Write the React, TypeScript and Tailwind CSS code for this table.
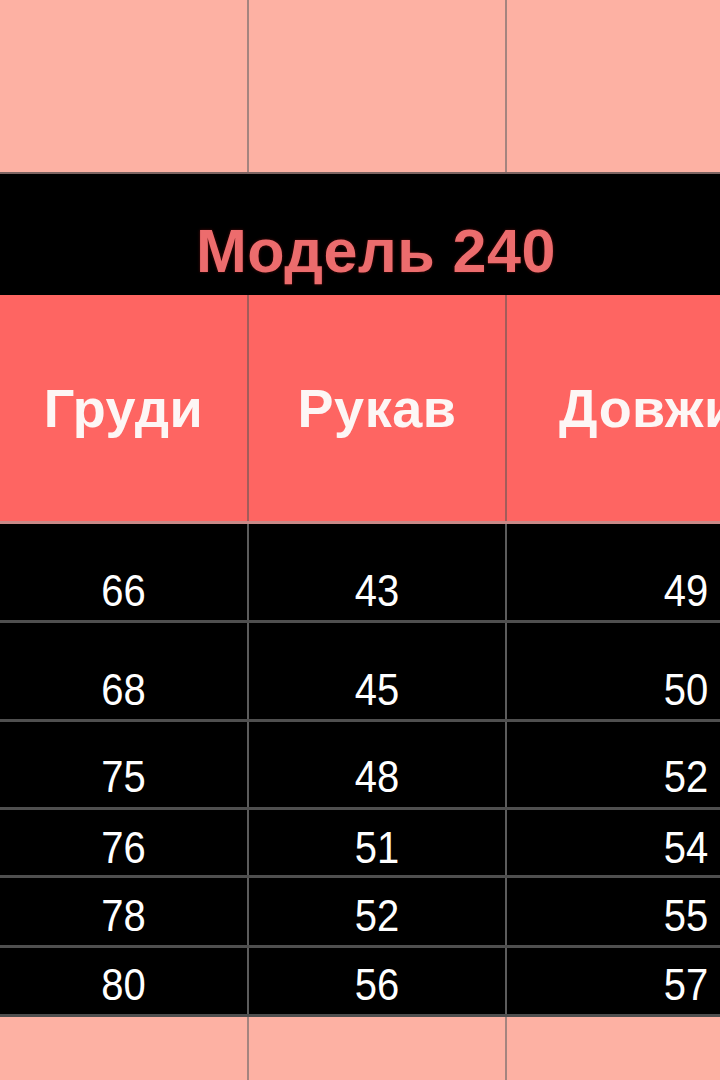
import * as React from "react"

// size table rows: chest, sleeve, length
const rows = [
  { values: ["66", "43", "49"], h: "h-[99px]", pt: "pt-[46px]" },
  { values: ["68", "45", "50"], h: "h-[99px]", pt: "pt-[46px]" },
  { values: ["75", "48", "52"], h: "h-[88px]", pt: "pt-[34px]" },
  { values: ["76", "51", "54"], h: "h-[68px]", pt: "pt-[17px]" },
  { values: ["78", "52", "55"], h: "h-[70px]", pt: "pt-[17px]" },
  { values: ["80", "56", "57"], h: "h-[69px]", pt: "pt-[16px]" },
]

const cols = "grid grid-cols-[249px_258px_358px]"

function PeachRow({ height, border }: { height: string; border: string }) {
  return (
    <div className={`${cols} ${height} bg-[#fdb1a3] ${border}`}>
      <div className="border-r-2 border-[#a4847f]" />
      <div className="border-r-2 border-[#a4847f]" />
      <div />
    </div>
  )
}

export default function App() {
  return (
    <div
      className="w-[720px] h-[1080px] overflow-hidden bg-black"
      style={{ fontFamily: '"Liberation Sans", Arial, sans-serif' }}
    >
      <div className="w-[865px]">
        {/* top peach band */}
        <PeachRow height="h-[174px]" border="border-b-2 border-[#7d6462]" />

        {/* model title */}
        <div className="h-[121px] bg-black pl-[196px] pt-[47px]">
          <div className="text-[61px] leading-none font-bold tracking-[0.5px] text-[#ec6c6d] [text-shadow:0_0_3px_#5a0d0d]">
            Модель 240
          </div>
        </div>

        {/* header */}
        <div className={`${cols} h-[229px] bg-[#fe6562] border-b-[3px] border-[#c98a88]`}>
          <div className="flex items-center justify-center border-r-2 border-[#a25c5a]">
            <span className="text-[54px] leading-none font-bold text-[#fdf6f5] tracking-[0.5px]">Груди</span>
          </div>
          <div className="flex items-center justify-center border-r-2 border-[#a25c5a]">
            <span className="text-[54px] leading-none font-bold text-[#fdf6f5] tracking-[0.5px]">Рукав</span>
          </div>
          <div className="flex items-center pl-[52px]">
            <span className="text-[54px] leading-none font-bold text-[#fdf6f5] tracking-[0.5px] whitespace-nowrap">Довжина</span>
          </div>
        </div>

        {/* data */}
        {rows.map((row, i) => (
          <div key={i} className={`${cols} ${row.h} border-b-[3px] border-[#4f4f4f]`}>
            {row.values.map((v, j) => (
              <div
                key={j}
                className={`flex justify-center items-start ${row.pt} ${j < 2 ? "border-r-2 border-[#5c5c5c]" : ""}`}
              >
                <span className="inline-block text-[40px] leading-none text-white scale-y-[1.12]">{v}</span>
              </div>
            ))}
          </div>
        ))}

        {/* bottom peach band */}
        <PeachRow height="h-[70px]" border="" />
      </div>
    </div>
  )
}
